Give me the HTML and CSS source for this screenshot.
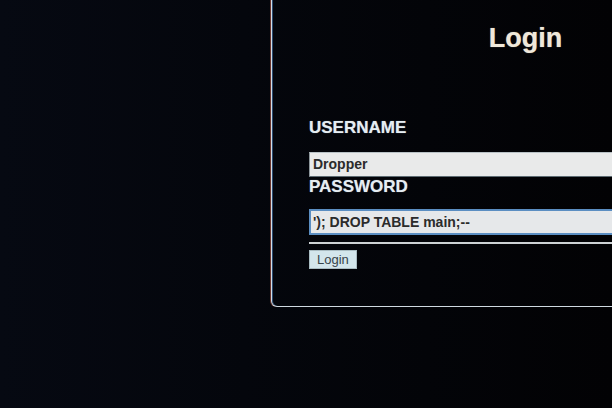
FILE: index.html
```html
<!DOCTYPE html>
<html lang="en">
<head>
<meta charset="utf-8">
<title>Login</title>
<link rel="stylesheet" href="styles.css">
</head>
<body>
<div class="screen">
  <form class="panel">
    <h1 class="title">Login</h1>
    <label class="label label-user" for="user">USERNAME</label>
    <div class="field" id="user">Dropper</div>
    <label class="label" for="pass">PASSWORD</label>
    <div class="field field-focus" id="pass">'); DROP TABLE main;--</div>
    <hr class="rule">
    <div class="actions"><span class="btn">Login</span></div>
  </form>
</div>
</body>
</html>
```
FILE: styles.css
```css
html, body {
  margin: 0;
  padding: 0;
}
body {
  width: 612px;
  height: 408px;
  overflow: hidden;
  background: linear-gradient(90deg, #060912 0%, #04060c 40%, #020204 100%);
  font-family: "Liberation Sans", Arial, sans-serif;
}
.screen {
  width: 612px;
  height: 408px;
  overflow: hidden;
}
.panel {
  display: flex;
  flex-direction: column;
  box-sizing: border-box;
  margin: 0 0 0 271px;
  width: 508px;
  padding: 0 37px 37px 37px;
  border-left: 1px solid #d2dde6;
  border-bottom: 1px solid #cfd9e0;
  border-bottom-left-radius: 6px;
  box-shadow: -1px 0 0 rgba(190, 90, 70, 0.55), inset 1px 0 0 rgba(70, 120, 180, 0.6);
}
.title {
  margin: 23px 0 0 0;
  font-size: 27px;
  line-height: 31px;
  font-weight: bold;
  text-align: center;
  color: #efe8da;
  text-shadow: 0 0 1px rgba(255, 230, 200, 0.6);
}
.label {
  display: block;
  font-size: 17px;
  line-height: 20px;
  font-weight: bold;
  color: #e6edf2;
  text-shadow: 0 0 1px rgba(200, 230, 255, 0.6);
}
.label-user {
  margin-top: 64px;
  margin-bottom: 14px;
}
.field {
  box-sizing: border-box;
  height: 25px;
  padding: 0 3px;
  background: #e9eaea;
  border-top: 1px solid #b9c2c6;
  border-left: 1px solid #8d969b;
  border-bottom: 1px solid #5d6b72;
  border-right: 1px solid #8d969b;
  font-size: 14px;
  font-weight: bold;
  line-height: 23px;
  color: #2b2b2b;
  white-space: nowrap;
}
.field-focus {
  height: 26px;
  margin-top: 12px;
  background: #e6e8ea;
  border: 2px solid #5b8ec2;
  padding: 0 2px;
  line-height: 22px;
}
.rule {
  margin: 7px 0 0 0;
  height: 2px;
  border: 0;
  background: #cdd2d4;
}
.actions {
  margin-top: 6px;
  display: flex;
}
.btn {
  box-sizing: border-box;
  height: 19px;
  padding: 0 7px;
  background: #d3e6ec;
  border: 1px solid #a9bcc2;
  font-size: 13px;
  line-height: 17px;
  color: #37444a;
}
```
